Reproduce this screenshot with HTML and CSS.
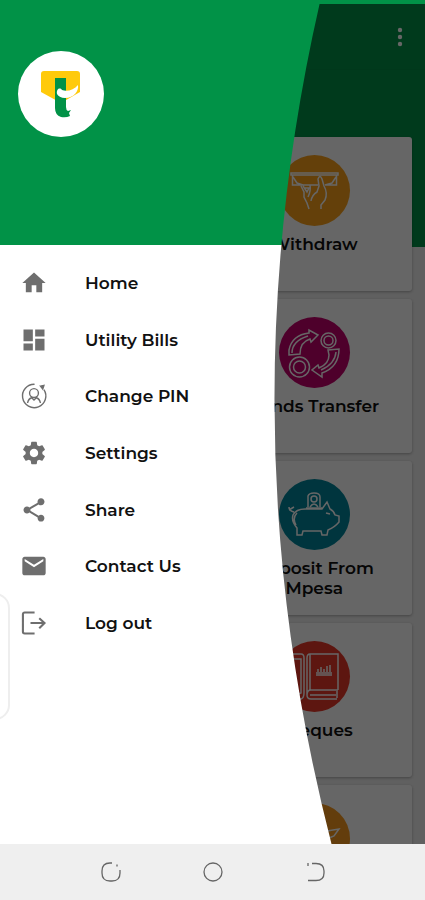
FILE: index.html
```html
<!DOCTYPE html>
<html lang="en">
<head>
<meta charset="utf-8">
<meta name="viewport" content="width=device-width, initial-scale=1">
<title>Mobile Banking</title>
<link rel="stylesheet" href="styles.css">
</head>
<body>
<svg class="defs" width="0" height="0" aria-hidden="true">
  <clipPath id="drawer-curve" clipPathUnits="objectBoundingBox">
    <path d="M0 0H.964Q.675 .5 1 1H0Z"/>
  </clipPath>
</svg>
<div class="screen">
  <div class="dashboard">
    <header class="appbar">
      <button class="more" type="button" aria-label="More options">
        <svg viewBox="0 0 24 24"><circle cx="12" cy="5" r="2.200"/><circle cx="12" cy="12" r="2.200"/><circle cx="12" cy="19" r="2.200"/></svg>
      </button>
    </header>
    <main class="cards">
      <button class="card" type="button">
        <svg class="badge amber" viewBox="0 0 71 71">
          <path d="M12 18H59V20H12ZM13.500 20V30H25M57.500 20V30H46M14 22L18 28L24 30M57 22L53 28L46 30M21 30H39M22 31L25 37V42L28 48L30 54M24 31L28 37L30 33H26M31 30Q32 36 29 42M32 46Q33 40 38 37L40 31L39 24Q41 19 43 24L45 31Q49 38 46 45L42 50V54"/>
        </svg>
        <span>Withdraw</span>
      </button>
      <button class="card" type="button">
        <svg class="badge magenta" viewBox="0 0 71 71">
          <path d="M10 38V33Q13 18 30 16V13L39 18L32 25L31 22Q21 25 21 37ZM13 36Q13 24 29 19M49 33L60 32Q60 50 43 56V60L33 53L39 48L40 51Q50 47 50 38ZM57 35Q56 47 42 53"/>
          <circle cx="49.500" cy="23.500" r="7.500"/><circle cx="49.500" cy="23.500" r="4.500"/>
          <circle cx="20.500" cy="50" r="10"/><circle cx="20.500" cy="50" r="6"/>
        </svg>
        <span>Funds Transfer</span>
      </button>
      <button class="card" type="button">
        <svg class="badge teal" viewBox="0 0 71 71">
          <path d="M26 30H43L48 23L51 30Q55 32 56 36L60 37V43Q56 48 49 51L48 56H43L42 52H24L23 56H18V49Q12 42 14 36Q17 30 26 30M17 46Q13 39 18 34M15 33Q10 32 10 28M10 31L15 28M27 29H43M29 28V17Q30 14 35 14Q41 14 41 18V28M47 34L51 35"/>
          <circle cx="35" cy="20" r="3"/><path d="M31 28Q35 22 39 28"/>
        </svg>
        <span>Deposit From Mpesa</span>
      </button>
      <button class="card" type="button">
        <svg class="badge red" viewBox="0 0 71 71">
          <path d="M59 49V13H31Q28 13 28 17V54Q28 58 32 58H58M59 49H32Q28 49 28 54M58 50V57M31 54H57M31 13V49M14 13H22Q25 13 25 17V52Q25 57 22 58H14M14 18H22V52L14 55M37 34H53M37 32H53M39 31V28M42 31V26M45 31V28M48 31V25M51 31V24"/>
        </svg>
        <span>Cheques</span>
      </button>
      <div class="card">
        <svg class="badge orange" viewBox="0 0 71 71"><path d="M48 28L60 26L55 33L50 35"/></svg>
      </div>
    </main>
  </div>
  <div class="scrim"></div>
  <aside class="drawer">
    <div class="profile">
      <svg class="logo" viewBox="0 0 86 86" role="img" aria-label="Bank logo">
        <circle cx="43" cy="43" r="43" fill="#fff"/>
        <path d="M26 20H59Q62 20 62 23V41L43 52L23 41V23Q23 20 26 20Z" fill="#ffca0b"/>
        <path d="M37 27H48V56Q48 59 50 60L53 59L51 62L52 65Q48 67 43 66Q37 64 37 57Z" fill="#019247"/>
        <path d="M39 43C38 38 42 36 44 39C49 41 56 39 60 34C61 40 56 47 47 47C43 47 40 45 39 43Z" fill="#fff"/>
      </svg>
    </div>
    <nav class="menu" aria-label="Main">
      <a href="#"><svg viewBox="0 0 24 24"><path d="M10 20v-6h4v6h5v-8h3L12 3 2 12h3v8z"/></svg>Home</a>
      <a href="#"><svg viewBox="0 0 24 24"><path d="M3 13h8V3H3v10zm0 8h8v-6H3v6zm10 0h8V11h-8v10zm0-18v6h8V3h-8z"/></svg>Utility Bills</a>
      <a href="#"><svg class="line" viewBox="0 0 24 24"><path d="M12.500 2A10 10 0 1 0 20.500 6.500"/><path d="M17.500 3.500L20.500 3L19.500 6Z" fill="#6e6e6e"/><circle cx="12" cy="9.500" r="3.800"/><path d="M6.500 18C7 15 8.500 14 10 13.500L12 15.500L14 13.500C15.500 14 17 15 17.500 18"/></svg>Change PIN</a>
      <a href="#"><svg viewBox="0 0 24 24"><path d="M19.140 12.940c.04-.3.06-.61.06-.94 0-.32-.02-.64-.07-.94l2.030-1.580c.18-.14.23-.41.12-.61l-1.920-3.320c-.12-.22-.37-.29-.59-.22l-2.390.96c-.5-.38-1.030-.7-1.620-.94L14.400 2.810c-.04-.24-.24-.41-.48-.41h-3.840c-.24 0-.43.17-.47.41L9.250 5.350c-.59.24-1.130.57-1.620.94l-2.390-.96c-.22-.08-.47 0-.59.22L2.740 8.870c-.12.21-.08.47.12.61l2.030 1.580c-.05.3-.09.63-.09.94s.02.64.07.94l-2.030 1.580c-.18.14-.23.41-.12.61l1.920 3.320c.12.22.37.29.59.22l2.390-.96c.5.38 1.030.7 1.620.94l.36 2.540c.05.24.24.41.48.41h3.840c.24 0 .44-.17.47-.41l.36-2.540c.59-.24 1.130-.56 1.620-.94l2.390.96c.22.08.47 0 .59-.22l1.920-3.320c.12-.22.07-.47-.12-.61l-2.010-1.580zM12 15.600c-1.980 0-3.600-1.620-3.600-3.600s1.620-3.600 3.600-3.600 3.600 1.620 3.600 3.600-1.620 3.600-3.600 3.600z"/></svg>Settings</a>
      <a href="#"><svg viewBox="0 0 24 24"><path d="M18 16.080c-.76 0-1.440.3-1.960.77L8.910 12.700c.05-.23.09-.46.09-.7s-.04-.47-.09-.7l7.050-4.110c.54.5 1.250.81 2.040.81 1.660 0 3-1.340 3-3s-1.340-3-3-3-3 1.340-3 3c0 .24.04.47.09.7L8.040 9.810C7.500 9.310 6.790 9 6 9c-1.660 0-3 1.340-3 3s1.340 3 3 3c.79 0 1.500-.31 2.040-.81l7.120 4.160c-.05.21-.08.43-.08.65 0 1.610 1.310 2.920 2.920 2.920s2.920-1.310 2.920-2.920-1.310-2.920-2.920-2.920z"/></svg>Share</a>
      <a href="#"><svg viewBox="0 0 24 24"><path d="M20 4H4c-1.100 0-1.990.9-1.990 2L2 18c0 1.100.9 2 2 2h16c1.100 0 2-.9 2-2V6c0-1.100-.9-2-2-2zm0 4l-8 5-8-5V6l8 5 8-5v2z"/></svg>Contact Us</a>
      <a href="#"><svg class="line bold" viewBox="0 0 24 24"><path d="M12.500 3H4Q2.500 3 2.500 4.500V19.500Q2.500 21 4 21H12.500M9 12H21M16.500 8L21 12L16.500 16.500"/></svg>Log out</a>
    </nav>
    <div class="edge-handle"></div>
  </aside>
</div>
<footer class="sysnav">
  <button type="button" aria-label="Recent apps"><svg viewBox="0 0 24 24"><path d="M13 3H11Q3 3 3 11V13Q3 21 11 21H13Q21 21 21 13V10M18 4.500V6.500"/></svg></button>
  <button type="button" aria-label="Home screen"><svg viewBox="0 0 24 24"><circle cx="12" cy="12" r="9"/></svg></button>
  <button type="button" aria-label="Back"><svg viewBox="0 0 24 24"><path d="M9 3.500H13Q21 3.500 21 11V13Q21 20.500 13 20.500H5M5 3V6"/></svg></button>
</footer>
</body>
</html>
```
FILE: styles.css
```css
* { box-sizing: border-box; }

body {
  margin: 0;
  height: 100vh;
  display: flex;
  flex-direction: column;
  background: #019247;
  color: #111;
  font: 600 17px/20px Montserrat, Inter, sans-serif;
}

.defs { position: absolute; }

button {
  border: 0;
  padding: 0;
  background: none;
  color: inherit;
  font: inherit;
}

.screen {
  position: relative;
  flex: 1;
  min-height: 0;
  margin-top: 4px;
  overflow: hidden;
}

.dashboard {
  height: 100%;
  overflow: hidden;
  background: linear-gradient(#019247 243px, #f0f0f0 243px);
}

.appbar {
  display: flex;
  justify-content: flex-end;
  align-items: center;
  height: 66px;
  padding-right: 13px;
  border-bottom: 1px solid #018c44;
}

.more svg {
  display: block;
  width: 24px;
  fill: #fff;
}

.cards {
  display: grid;
  grid-template-columns: 1fr 1fr;
  grid-auto-rows: 154px;
  gap: 8px;
  padding: 67px 13px 0;
}

.card {
  grid-column: 2;
  display: flex;
  flex-direction: column;
  align-items: center;
  gap: 8px;
  padding: 18px 20px;
  border-radius: 3px;
  background: #fff;
  box-shadow: 0 1px 3px rgba(0, 0, 0, .3);
}

.badge {
  flex: none;
  width: 71px;
  height: 71px;
  border-radius: 50%;
  fill: none;
  stroke: #fff;
  stroke-width: 1.5;
}

.amber { background: #f9a11b; }
.magenta { background: #c4006b; }
.teal { background: #00869b; }
.red { background: #e8392a; }
.orange { background: #f79a1f; }

.scrim {
  position: absolute;
  inset: 0;
  background: rgba(0, 0, 0, .6);
}

.drawer {
  position: absolute;
  inset: 0 auto 0 0;
  width: 78%;
  background: linear-gradient(#019247 241px, #fff 241px);
  clip-path: url(#drawer-curve);
}

.profile {
  height: 241px;
  padding: 47px 18px;
}

.logo {
  display: block;
  width: 86px;
}

.menu {
  display: grid;
  grid-auto-rows: 1fr;
  min-height: 396px;
  margin-top: 10px;
}

.menu a {
  display: flex;
  align-items: center;
  gap: 37px;
  padding-left: 20px;
  color: inherit;
  text-decoration: none;
}

.menu svg {
  width: 28px;
  height: 28px;
  fill: #6e6e6e;
}

.menu .line {
  fill: none;
  stroke: #6e6e6e;
  stroke-width: 1.2;
}

.menu .bold { stroke-width: 1.8; }

.edge-handle {
  position: absolute;
  top: 589px;
  left: -20px;
  width: 30px;
  height: 127px;
  border: 2px solid #eee;
  border-radius: 16px;
}

.sysnav {
  display: grid;
  grid-template-columns: repeat(3, 1fr);
  place-items: center;
  height: 56px;
  padding: 0 14%;
  background: #efefef;
}

.sysnav svg {
  display: block;
  width: 24px;
  fill: none;
  stroke: #666;
  stroke-width: 1.3;
}
```
